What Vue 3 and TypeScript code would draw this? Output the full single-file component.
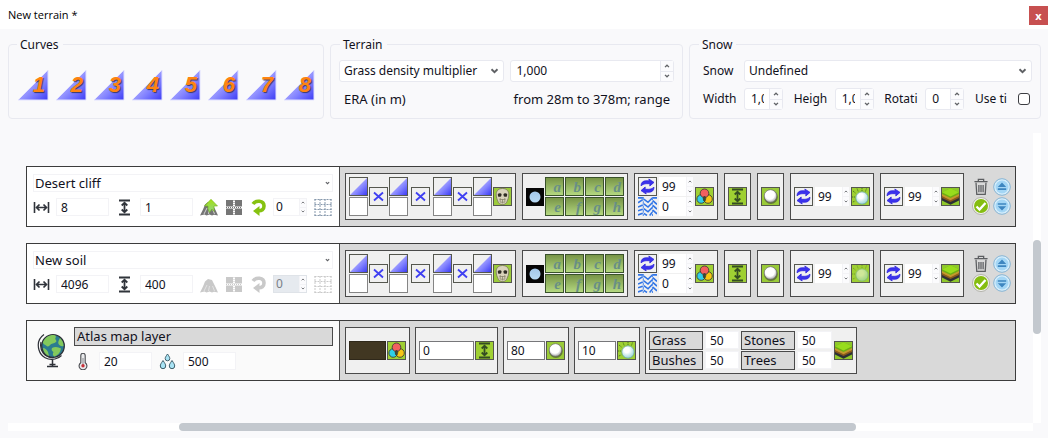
<script setup lang="ts">
import { reactive, ref } from 'vue'

interface Soil {
  name: string
  width: string
  height: string
  rotation: string
  enabled: boolean
}

const curves = [1, 2, 3, 4, 5, 6, 7, 8]
const letters = ['a', 'b', 'c', 'd', 'e', 'f', 'g', 'h']
const soils = reactive<Soil[]>([
  { name: 'Desert cliff', width: '8', height: '1', rotation: '0', enabled: true },
  { name: 'New soil', width: '4096', height: '400', rotation: '0', enabled: false },
])
const multiplier = ref('1,000')
const snowSizes = reactive([
  { label: 'Width', value: '1,000' },
  { label: 'Heigh', value: '1,000' },
  { label: 'Rotati', value: '0' },
])
const tiling = ref(false)
const coverage = reactive([
  { label: 'Grass', value: '50' },
  { label: 'Stones', value: '50' },
  { label: 'Bushes', value: '50' },
  { label: 'Trees', value: '50' },
])
</script>

<template>
  <svg class="defs" width="0" height="0" aria-hidden="true">
    <defs>
      <linearGradient id="blue" x1="0" y1="0" x2="1" y2="1">
        <stop offset="0.35" stop-color="#b4b4ff" />
        <stop offset="0.65" stop-color="#8080ff" />
        <stop offset="1" stop-color="#3c3cf5" />
      </linearGradient>
      <radialGradient id="pearl" cx="0.45" cy="0.4" r="0.6">
        <stop offset="0.6" stop-color="#fff" />
        <stop offset="1" stop-color="#a8a8a8" />
      </radialGradient>
      <radialGradient id="ice" cx="0.4" cy="0.35" r="0.7">
        <stop offset="0.3" stop-color="#fff" />
        <stop offset="1" stop-color="#8fd0d4" />
      </radialGradient>
      <linearGradient id="sky" x1="0" y1="0" x2="0" y2="1">
        <stop offset="0" stop-color="#a4c8ea" />
        <stop offset="1" stop-color="#b8daf4" />
      </linearGradient>
      <linearGradient id="leaf" x1="0" y1="0" x2="0" y2="1">
        <stop offset="0" stop-color="#a4e010" />
        <stop offset="1" stop-color="#8fd48a" />
      </linearGradient>
    </defs>
    <symbol id="i-curve" viewBox="0 0 32 32"><path d="M1 31 31 1V31Z" fill="url(#blue)" stroke="#e2e2ff" stroke-width="1" /></symbol>
    <symbol id="i-ramp" viewBox="0 0 17 17"><path d="M0 17 17 0V17Z" fill="url(#blue)" /></symbol>
    <symbol id="i-cross" viewBox="0 0 17 17"><path d="m4 4.500 9 8m0-8-9 8" stroke="#3f3ff2" stroke-width="1.800" /></symbol>
    <symbol id="i-skull" viewBox="0 0 17 17">
      <rect width="17" height="17" fill="#9ccb3b" />
      <path d="M8.500 .5C4 .5 2 3.500 2.200 7c.1 3 1 4.500 1.800 6.500.6 1.800 2 3 4.500 3s3.900-1.200 4.500-3c.8-2 1.700-3.500 1.800-6.500C15 3.500 13 .5 8.500 .5Z" fill="#d9d3bb" stroke="#77745c" stroke-width=".8" />
      <path d="M3.800 6c1.200-1.200 3.200-1 3.800.3l-.4 1.900c-1 .8-2.800.7-3.200 0ZM13.200 6c-1.200-1.200-3.200-1-3.800.3l.4 1.900c1 .8 2.800.7 3.200 0Z" fill="#2f2d24" />
      <path d="M5.500 11.500h6M6.500 14.200h4M6.200 10v4.500M8.500 11v4.500M10.800 10v4.500" stroke="#8a866f" stroke-width=".8" fill="none" />
    </symbol>
    <symbol id="i-moon" viewBox="0 0 18 18"><rect width="18" height="18" fill="#060606" /><circle cx="9" cy="9" r="5.500" fill="url(#sky)" /></symbol>
    <symbol id="i-cycle" viewBox="0 0 17 17">
      <g fill="#3b32ee" stroke="#2f25dd" stroke-width=".8" stroke-linejoin="round">
        <path d="M2 7.800C2 4.500 4 2.800 7 2.800h3.500L9.800 1 15 4.400 10.800 8l.1-2.300H7.500C5.300 5.700 4 6.300 2 7.800Z" />
        <path d="M15 9.200c0 3.300-2 5-5 5H6.500l.7 1.800L2 12.600 6.200 9l-.1 2.300h3.400c2.200 0 3.500-.6 5.500-2.100Z" />
      </g>
    </symbol>
    <symbol id="i-tread" viewBox="0 0 18 18">
      <path d="M0 .8h5M0 5.500 4.500 2.500M0 9.500 4.500 7.500M0 13 4.500 11.500M0 17 4.500 15.500M5.500 2 9.500 5 13.500 1M5.500 6.500l4 3 4-4M5.500 11l4 3 4-4M5.500 15.500l3 2M11 17.500l2.500-3M13.500 .8H18M14 3.500 18 7M14 8l4 3.500M14 12.500l4 3.500" fill="none" stroke="#2f74e6" stroke-width="1.500" />
      <path d="M5 0v18M13.700 0v18" stroke="#4f8bea" stroke-width="1" stroke-dasharray="3 1" />
    </symbol>
    <symbol id="i-rgb" viewBox="0 0 17 17">
      <rect width="17" height="17" fill="#9fd033" />
      <g stroke="#3f3f35" stroke-width=".9">
        <circle cx="5.200" cy="11" r="4.300" fill="#2fcfe8" /><circle cx="12" cy="11" r="4.300" fill="#f7c614" /><circle cx="8.500" cy="5.300" r="4.300" fill="#f25f5f" />
        <path d="M8.500 8c1 .8 1.500 2 1.100 3.400-.2.900-.6 1.500-1.100 2.100-.5-.6-.9-1.200-1.100-2.100C7 10 7.500 8.800 8.500 8Z" fill="#3d4a35" />
      </g>
    </symbol>
    <symbol id="i-height" viewBox="0 0 17 17">
      <path d="M3 1.500h11M3 15.500h11" stroke="currentColor" stroke-width="1.800" />
      <path d="M8.500 4v9M5.700 6.500 8.500 3.700l2.800 2.800M5.700 10.500l2.800 2.800 2.800-2.800" fill="none" stroke="currentColor" stroke-width="1.800" />
    </symbol>
    <symbol id="i-green-height" viewBox="0 0 17 17"><rect width="17" height="17" fill="#9fd033" /><use href="#i-height" width="17" height="17" color="#344d22" /></symbol>
    <symbol id="i-width" viewBox="0 0 17 17">
      <path d="M1.500 3v11M15.500 3v11" stroke="currentColor" stroke-width="1.600" />
      <path d="M3.500 8.500h10M6.500 5.500l-3 3 3 3M10.500 5.500l3 3-3 3" fill="none" stroke="currentColor" stroke-width="1.700" />
    </symbol>
    <symbol id="i-pearl" viewBox="0 0 17 17"><rect width="17" height="17" fill="#9acb38" /><circle cx="8.900" cy="9" r="6.900" fill="#4c5636" opacity=".7" /><circle cx="8.500" cy="8" r="6.300" fill="url(#pearl)" stroke="#666" stroke-width=".6" /></symbol>
    <symbol id="i-ice" viewBox="0 0 17 17">
      <rect width="17" height="17" fill="#9fd033" />
      <circle cx="10" cy="10" r="6.200" fill="url(#ice)" stroke="#5f9c94" stroke-width=".7" />
      <path d="m1 3 3 2.500M5 .5l1.200 3M10 0v3M0 9h3M14.500 .5l-1 3M.8 14l2.400-1" stroke="#4d7d1e" stroke-width="1" stroke-dasharray="1.200 .7" />
    </symbol>
    <symbol id="i-layers" viewBox="0 0 17 17">
      <rect width="17" height="17" fill="#8fc82a" />
      <path d="M0 9 8.500 12.500 17 9V12.500l-8.500 4.200L0 12.500Z" fill="#2c3034" />
      <path d="M0 7.500 8.500 11.500 17 7.500V10l-8.500 4L0 10Z" fill="#8a5a1c" />
      <path d="M0 5.500 8.500 9.500 17 5.500V8l-8.500 4.200L0 8Z" fill="#c4982c" />
      <path d="M0 4.200 8.500 .2 17 4.200V6L8.500 10 0 6Z" fill="#6fae14" />
      <path d="M0 4.200 8.500 .2 17 4.200 8.500 8.500Z" fill="#98dd1c" />
    </symbol>
    <symbol id="i-cliff" viewBox="0 0 18 17">
      <path d="M0 16.500 3 10.500 5 5.500 8 3l4 1 3.500 7L18 16.500l-4-.8-2 .8-2.500-1-3 1-2-1Z" fill="currentColor" />
      <path d="m4 15 3-6M8.500 15l1-5M12.500 10l2 5" fill="none" stroke="#e8e8e8" stroke-width=".8" />
    </symbol>
    <symbol id="i-raise" viewBox="0 0 18 17"><path d="M11 .3 17.500 7H14v5.500L12 10 9.500 13.500 8 10V7H4.500Z" fill="url(#leaf)" stroke="#73b30d" stroke-width=".6" /></symbol>
    <symbol id="i-tiles" viewBox="0 0 16 17">
      <path d="M0 1h7v6.500H0ZM9 1h7v6.500H9ZM0 9.500h7V16H0ZM9 9.500h7V16H9Z" fill="currentColor" />
      <path d="M8 1v15M0 8.500h16" stroke="currentColor" stroke-dasharray="1 1" />
    </symbol>
    <symbol id="i-turn" viewBox="0 0 16 17"><path d="M2 5C4.500 1 13 1.200 13 7c0 3.500-2.500 5-5.500 4.800" fill="none" stroke="currentColor" stroke-width="3.600" /><path d="M8.500 7V17L2 12Z" fill="currentColor" /></symbol>
    <symbol id="i-grid" viewBox="0 0 17 17"><path d="M.5 0v17M5.500 0v17M10.500 0v17M16.500 0v17M0 .5h17M0 5.500h17M0 10.500h17M0 16.500h17" stroke="currentColor" stroke-dasharray="2 1" /></symbol>
    <symbol id="i-trash" viewBox="0 0 14 17">
      <path d="M2.300 4.500 3 15.500h8l.7-11M.8 3.500h12.400M4.500 3V1.300h5V3M5 6.500v7M7 6.500v7M9 6.500v7" fill="none" stroke="#5c5e61" stroke-width="1.200" />
    </symbol>
    <symbol id="i-check" viewBox="0 0 18 18"><circle cx="9" cy="9" r="8.500" fill="#f4f4f0" stroke="#b2b2aa" /><circle cx="9" cy="9" r="7" fill="#85bd10" /><path d="m4.500 9.500 3 3 6-6.500" fill="none" stroke="#fff" stroke-width="2.300" /></symbol>
    <symbol id="i-disc" viewBox="0 0 18 18"><circle cx="9" cy="9" r="8.300" fill="#d7eefb" stroke="#86b4d4" /><circle cx="9" cy="9" r="6.500" fill="#a4d6f5" /></symbol>
    <symbol id="i-up" viewBox="0 0 18 18"><use href="#i-disc" width="18" height="18" /><path d="m9 4.500 4.200 4.500H4.800ZM4.800 10.300h8.400v1.700H4.800Z" fill="#3e86c0" /></symbol>
    <symbol id="i-down" viewBox="0 0 18 18"><use href="#i-disc" width="18" height="18" /><path d="m9 13.500 4.200-4.300H4.800ZM4.800 6.200h8.400v1.600H4.800Z" fill="#3e86c0" /></symbol>
    <symbol id="i-chev" viewBox="0 0 9 6"><path d="M1.500 1.300 4.500 4.200 7.500 1.300" fill="none" stroke="#5e6064" stroke-width="1.900" /></symbol>
    <symbol id="i-globe" viewBox="0 0 28 35">
      <path d="M7 1.500C2 5 .3 11 2 17c2 7 9 10.500 16 9 3-.6 5-2 6.500-3.500M4 9c-2 9 4 16 13 15.500" fill="none" stroke="#2e3138" stroke-width="1.200" />
      <circle cx="16" cy="13" r="11.300" fill="#2b7b90" stroke="#2e3138" stroke-width="1.300" />
      <path d="M6 9c2-4.500 6-7 10.500-7 2 0 3 1 2 3-1 1.500 2 2.500.5 4-2 1.800-4.500 1-6 3-.8 1.500-2.500 2-4 .5C7.500 11 6 11.500 6 9ZM23 5c2.500 2.500 3.500 5 3.500 8-2 1-4-.5-5-2-.8-2 .5-4 1.500-6ZM15 15c3-2 6.500-1 9 .5-.5 4-3 6.500-6.500 8-2-.5-2-3-1-4.500-1.500-.8-2.500-2.500-1.500-4ZM6 15c2 0 4 2 5 4l1 4C9 22 6.500 19 6 15Z" fill="#83c95c" />
      <path d="M15.500 26.500V33M10 33.500h11M12.500 31.500h6" stroke="#2e3138" stroke-width="1.500" />
    </symbol>
    <symbol id="i-thermo" viewBox="0 0 10 17"><path d="M2.800 2.500a2.200 2.200 0 0 1 4.400 0v7.200a3.900 3.900 0 1 1-4.400 0Z" fill="#e9eaec" stroke="#4b4d52" stroke-width="1.100" /><path d="M5 5v7" stroke="#8b8b90" stroke-width="1" /><circle cx="5" cy="12.800" r="1.700" fill="#c8323a" /></symbol>
    <symbol id="i-drops" viewBox="0 0 16 17"><g fill="#a8e3f4" stroke="#41606c"><path d="M8 1c1.700 2.500 2.300 3.500 2.300 4.500a2.300 2.300 0 0 1-4.600 0C5.700 4.500 6.300 3.500 8 1ZM3.500 7.500c2 3 2.700 4 2.700 5.500a2.700 2.700 0 0 1-5.400 0c0-1.500.7-2.500 2.700-5.500ZM12.500 7.500c2 3 2.700 4 2.700 5.500a2.700 2.700 0 0 1-5.400 0c0-1.500.7-2.500 2.700-5.500Z" /></g></symbol>
  </svg>

  <div class="window">
    <header class="titlebar">
      <h1>New terrain *</h1>
      <button class="close" type="button">x</button>
    </header>

    <div class="panels">
      <fieldset>
        <legend>Curves</legend>
        <div class="curves">
          <button v-for="n in curves" :key="n" type="button" class="curve">
            <svg><use href="#i-curve" /></svg>
            <span>{{ n }}</span>
          </button>
        </div>
      </fieldset>

      <fieldset>
        <legend>Terrain</legend>
        <div class="terrain">
          <label class="combo">
            <select aria-label="Terrain property"><option>Grass density multiplier</option></select>
            <svg class="chev"><use href="#i-chev" /></svg>
          </label>
          <div class="spin">
            <input v-model="multiplier" aria-label="Multiplier" />
            <span class="steps">
              <button type="button" aria-label="Increase"><svg class="flip"><use href="#i-chev" /></svg></button>
              <button type="button" aria-label="Decrease"><svg><use href="#i-chev" /></svg></button>
            </span>
          </div>
          <span class="era">ERA (in m)</span>
          <span class="range">from 28m to 378m; range</span>
        </div>
      </fieldset>

      <fieldset>
        <legend>Snow</legend>
        <div class="snow">
          <div class="line">
            <label class="cap" for="snow-kind">Snow</label>
            <div class="combo">
              <select id="snow-kind"><option>Undefined</option></select>
              <svg class="chev"><use href="#i-chev" /></svg>
            </div>
          </div>
          <div class="line spread">
            <div v-for="(s, i) in snowSizes" :key="s.label" class="pair">
              <label class="cap" :for="'snow-' + i">{{ s.label }}</label>
              <div class="spin small">
                <input :id="'snow-' + i" v-model="s.value" />
                <span class="steps">
                  <button type="button" aria-label="Increase"><svg class="flip"><use href="#i-chev" /></svg></button>
                  <button type="button" aria-label="Decrease"><svg><use href="#i-chev" /></svg></button>
                </span>
              </div>
            </div>
            <div class="pair">
              <label class="cap" for="tiling">Use ti</label>
              <input id="tiling" v-model="tiling" class="tick" type="checkbox" />
            </div>
          </div>
        </div>
      </fieldset>
    </div>

    <main class="viewport">
      <div class="layers">
        <section v-for="soil in soils" :key="soil.name" class="layer">
          <div class="side" :class="{ off: !soil.enabled }">
            <div class="combo flat">
              <select :aria-label="soil.name"><option>{{ soil.name }}</option></select>
              <svg class="chev tiny"><use href="#i-chev" /></svg>
            </div>
            <div class="tools">
              <svg class="ic dark"><use href="#i-width" /></svg>
              <input v-model="soil.width" class="field" aria-label="Width" />
              <svg class="ic dark lead"><use href="#i-height" /></svg>
              <input v-model="soil.height" class="field" aria-label="Height" />
              <button type="button" class="tool gray" aria-label="Cliff" :disabled="!soil.enabled">
                <svg><use href="#i-cliff" /><use v-if="soil.enabled" href="#i-raise" /></svg>
              </button>
              <button type="button" class="tool gray" aria-label="Tiles" :disabled="!soil.enabled"><svg><use href="#i-tiles" /></svg></button>
              <button type="button" class="tool green" aria-label="Rotate" :disabled="!soil.enabled"><svg><use href="#i-turn" /></svg></button>
              <div class="spin flat turn">
                <input v-model="soil.rotation" aria-label="Rotation" :disabled="!soil.enabled" />
                <span class="steps">
                  <button type="button" aria-label="Increase"><svg class="flip"><use href="#i-chev" /></svg></button>
                  <button type="button" aria-label="Decrease"><svg><use href="#i-chev" /></svg></button>
                </span>
              </div>
              <button type="button" class="tool mesh" aria-label="Grid" :disabled="!soil.enabled"><svg><use href="#i-grid" /></svg></button>
            </div>
          </div>

          <div class="bar">
            <div class="group">
              <template v-for="k in 4" :key="k">
                <div class="stack">
                  <button type="button" class="box" aria-label="Curve"><svg><use href="#i-ramp" /></svg></button>
                  <button type="button" class="box blank" aria-label="Empty slot"></button>
                </div>
                <button v-if="k < 4" type="button" class="box" :class="{ middle: k === 2 }" aria-label="Multiply"><svg><use href="#i-cross" /></svg></button>
              </template>
              <button type="button" class="box" aria-label="Mask"><svg><use href="#i-skull" /></svg></button>
            </div>

            <div class="group">
              <svg class="moon"><use href="#i-moon" /></svg>
              <div class="letters">
                <button v-for="l in letters" :key="l" type="button" class="letter">{{ l }}</button>
              </div>
            </div>

            <div class="group wide">
              <div class="stack">
                <button type="button" class="box" aria-label="Repeat"><svg><use href="#i-cycle" /></svg></button>
                <svg class="tread"><use href="#i-tread" /></svg>
              </div>
              <div class="stack">
                <div v-for="v in ['99', '0']" :key="v" class="spin flat count">
                  <input :value="v" aria-label="Count" />
                  <span class="steps">
                    <button type="button" aria-label="Increase"><svg class="flip"><use href="#i-chev" /></svg></button>
                    <button type="button" aria-label="Decrease"><svg><use href="#i-chev" /></svg></button>
                  </span>
                </div>
              </div>
              <button type="button" class="box" aria-label="Colour"><svg><use href="#i-rgb" /></svg></button>
            </div>

            <div class="group"><button type="button" class="box" aria-label="Height"><svg><use href="#i-green-height" /></svg></button></div>
            <div class="group"><button type="button" class="box" aria-label="Gloss"><svg><use href="#i-pearl" /></svg></button></div>

            <div v-for="icon in ['ice', 'layers']" :key="icon" class="group wide">
              <button type="button" class="box" aria-label="Repeat"><svg><use href="#i-cycle" /></svg></button>
              <div class="spin flat count">
                <input value="99" aria-label="Count" />
                <span class="steps">
                  <button type="button" aria-label="Increase"><svg class="flip"><use href="#i-chev" /></svg></button>
                  <button type="button" aria-label="Decrease"><svg><use href="#i-chev" /></svg></button>
                </span>
              </div>
              <button type="button" class="box" :class="{ faded: icon === 'ice' && !soil.enabled }" :aria-label="icon"><svg><use :href="'#i-' + icon" /></svg></button>
            </div>

            <div class="actions">
              <button type="button" aria-label="Delete"><svg><use href="#i-trash" /></svg></button>
              <button type="button" aria-label="Move up"><svg><use href="#i-up" /></svg></button>
              <button type="button" aria-label="Apply"><svg><use href="#i-check" /></svg></button>
              <button type="button" aria-label="Move down"><svg><use href="#i-down" /></svg></button>
            </div>
          </div>
        </section>

        <section class="layer">
          <div class="side atlas">
            <svg class="globe"><use href="#i-globe" /></svg>
            <div class="atlas-body">
              <div class="plate">Atlas map layer</div>
              <div class="tools climate">
                <svg class="thermo"><use href="#i-thermo" /></svg>
                <input class="field" value="20" aria-label="Temperature" />
                <svg class="ic"><use href="#i-drops" /></svg>
                <input class="field" value="500" aria-label="Rainfall" />
              </div>
            </div>
          </div>
          <div class="bar snug">
            <div class="group">
              <button type="button" class="swatch" aria-label="Base colour"></button>
              <button type="button" class="box" aria-label="Colour"><svg><use href="#i-rgb" /></svg></button>
            </div>
            <div class="group">
              <input class="well long" value="0" aria-label="Height" />
              <button type="button" class="box" aria-label="Height"><svg><use href="#i-green-height" /></svg></button>
            </div>
            <div class="group">
              <input class="well" value="80" aria-label="Gloss" />
              <button type="button" class="box" aria-label="Gloss"><svg><use href="#i-pearl" /></svg></button>
            </div>
            <div class="group">
              <input class="well" value="10" aria-label="Ice" />
              <button type="button" class="box" aria-label="Ice"><svg><use href="#i-ice" /></svg></button>
            </div>
            <div class="group wide">
              <div class="coverage">
                <template v-for="c in coverage" :key="c.label">
                  <label class="plate" :for="'cover-' + c.label">{{ c.label }}</label>
                  <input :id="'cover-' + c.label" v-model="c.value" class="field" />
                </template>
              </div>
              <button type="button" class="box" aria-label="Layers"><svg><use href="#i-layers" /></svg></button>
            </div>
          </div>
        </section>
      </div>
      <div class="track-v"><div class="thumb-v"></div></div>
      <div class="track-h"><div class="thumb-h"></div></div>
    </main>
  </div>
</template>

<style>
html,
body {
  background: #f9f9fb;
}
</style>

<style scoped>
.defs { position: absolute; }
.window, .window * { box-sizing: border-box; }
.window {
  font: 12px/16px 'Noto Sans', sans-serif;
  color: #11111c;
  min-height: 100vh;
  display: flex;
  flex-direction: column;
}
svg { display: block; }
button, input, select { font: inherit; color: inherit; margin: 0; padding: 0; border: 0; min-width: 0; border-radius: 0; background: none; outline: 0; }
select { appearance: none; }

.titlebar { height: 29px; background: #fff; display: flex; align-items: center; justify-content: space-between; padding-left: 8px; }
h1 { margin: 0; font: 11px/16px 'Open Sans', sans-serif; color: #000; }
.close { align-self: flex-end; margin-bottom: 4px; width: 19px; height: 19px; background: #c75050; color: #fff; font: bold 11px/16px 'Open Sans', sans-serif; }

.panels { display: grid; grid-template-columns: 316fr 353fr 352fr; gap: 6px; padding: 8px 7px 0 8px; }
fieldset { margin: 0; min-width: 0; height: 82px; border: 1px solid #e8e9f0; border-radius: 4px; padding: 0 9px; }
legend { padding: 0 4px 0 3px; line-height: 15px; }
fieldset:first-child { padding: 0 8px; }
.curves { display: flex; justify-content: space-between; padding: 17px 0 0; }
.curve { display: grid; width: 32px; height: 32px; }
.curve svg, .curve span { grid-area: 1 / 1; }
.curve svg { width: 32px; height: 32px; }
.curve span { align-self: center; text-align: right; padding-right: 4px; font: italic bold 22px/30px 'Liberation Sans', sans-serif; color: #ff8410; text-shadow: 1px 1px 1px #3a3a66; }

.combo, .spin { background: #fff; border: 1px solid #e8e9f0; border-radius: 3px; height: 22px; min-width: 0; }
.combo { display: grid; align-items: center; }
.combo select, .combo svg { grid-area: 1 / 1; }
.combo select { width: 100%; height: 20px; padding: 0 4px; }
.chev { justify-self: end; width: 9px; height: 6px; margin-right: 4px; pointer-events: none; }
.chev.tiny { width: 5px; height: 4px; margin-right: 2px; }
.spin { display: flex; }
.spin input { flex: 1; width: 0; padding: 0 0 0 6px; }
.steps { display: flex; flex-direction: column; width: 13px; border-left: 1px solid #e8e9f0; background: #fbfbfd; }
.steps button { flex: 1; display: grid; place-items: center; }
.steps button + button { border-top: 1px solid #e8e9f0; }
.steps svg { width: 6px; height: 4px; }
.flip { transform: rotate(180deg); }
.terrain { display: grid; grid-template-columns: 1fr 1fr; gap: 6px; padding: 8px 0 0; margin: 0 -1px; align-items: center; }
.era, .range, .plate { font-size: 13px; }
.era { padding-left: 5px; line-height: 22px; }
.range { text-align: right; padding-right: 4px; white-space: nowrap; }
.snow { display: grid; gap: 6px; padding: 8px 0 0 4px; margin-right: -1px; }
.line { display: flex; align-items: center; height: 22px; }
.line .combo { flex: 1; }
.cap { width: 35px; margin-right: 6px; white-space: nowrap; }
.spread { justify-content: space-between; }
.pair { display: flex; align-items: center; }
.spin.small { width: 39px; }
.small input { padding-right: 5px; }
.tick { appearance: none; width: 12px; height: 12px; margin: 0 2px; border: 1px solid #3c3d42; border-radius: 3px; background: #fff; }

.viewport { flex: 1; display: grid; grid-template: 1fr 8px / 1fr 8px; margin: 14px 7px 7px 8px; }
.layers { display: flex; flex-direction: column; gap: 16px; padding: 33px 17px 42px 18px; min-width: 0; }
.track-v { background: #fff; padding-top: 107px; }
.thumb-v { height: 94px; border-radius: 4px; background: #c3c8ce; }
.track-h { background: #fff; }
.thumb-h { width: 66%; height: 8px; margin-left: 16.7%; border-radius: 4px; background: #c3c8ce; }

.layer { display: flex; height: 61px; border: 1px solid #3c3c3c; background: #d9d9d9; }
.side { flex: 0 0 313px; border-right: 1px solid #4a4a4a; background: #fff; padding: 7px 6px 0; }
.bar { flex: 1; display: flex; align-items: center; gap: 6px; padding: 0 4px 0 5px; }
.snug { gap: 5px; }
.flat { border-color: #f3f3f6; border-radius: 0; height: 18px; }
.flat select { height: 16px; padding: 0 1px; font-size: 13px; line-height: 16px; }
.tools { display: flex; align-items: center; margin-top: 6px; height: 18px; }
.tools .field { width: 53px; }
.field { height: 18px; padding-left: 4px; background: #fff; border: 1px solid #f3f3f6; }
.ic { width: 17px; height: 17px; margin-right: 6px; }
.dark { color: #30343b; }
.lead { margin-left: 7px; margin-right: 7px; }
.tool { margin-left: 7px; }
.tool svg { width: 18px; height: 17px; }
.gray { color: #757575; }
.green { color: #86c210; }
.mesh { color: #8799ad; }
.turn { width: 34px; margin-left: 5px; }
.turn input { padding-left: 2px; }
.flat .steps { width: 7px; border-color: #f3f3f6; }
.flat .steps button + button { border-color: #f3f3f6; }
.flat .steps svg { width: 4px; height: 3px; }
.off .tool { color: #c9c9c9; }
.off .turn { background: #e6eaef; color: #7a7f87; border-color: #dfe3e8; }

.group { display: flex; align-items: center; gap: 1px; height: 47px; padding: 3px; border: 1px solid #4a4a4a; background: #f0f0f0; }
.wide { gap: 2px; }
.stack { display: grid; gap: 1px; }
.box { width: 19px; height: 19px; border: 1px solid #55574f; background: #f0f0f0; }
.box svg { width: 17px; height: 17px; }
.blank { background: #fff; border-color: #858585; }
.middle { margin: 0 2px; }
.faded svg { opacity: 0.5; }
.faded { background: #9fd033; }
.moon { width: 18px; height: 18px; }
.letters { display: grid; grid-template-columns: repeat(4, 19px); gap: 1px; }
.letter { height: 19px; border: 1px solid #39522b; background: linear-gradient(#779447, #b4d880); color: #688f86; font: italic bold 15px/15px 'Liberation Serif', serif; text-align: right; padding: 2px 2px 0 0; }
.tread { width: 19px; height: 19px; }
.count { width: 34px; height: 19px; border: 0; }
.count input { padding-left: 3px; }
.actions { margin-left: auto; display: grid; grid-template-columns: 18px 18px; gap: 1px 3px; }
.actions button { height: 18px; }
.actions svg { width: 18px; height: 18px; }

.atlas { display: flex; background: #fafafa; padding: 6px 6px 0 10px; }
.globe { width: 28px; height: 35px; margin-top: 6px; }
.atlas-body { flex: 1; margin-left: 9px; }
.plate { height: 19px; border: 1px solid #4a4a4a; background: #d9d9d9; padding-left: 2px; line-height: 17px; }
.climate { padding-left: 4px; }
.thermo { width: 10px; height: 17px; margin-right: 11px; }
.climate .ic { margin: 0 7px; }
.swatch { width: 37px; height: 19px; background: #413722; border: 1px solid #2f281a; }
.well { width: 38px; height: 19px; border: 1px solid #77777a; background: #fff; padding-left: 3px; }
.long { width: 55px; }
.coverage { display: grid; grid-template-columns: 54px 34px 54px 35px; gap: 1px 2px; }
</style>
